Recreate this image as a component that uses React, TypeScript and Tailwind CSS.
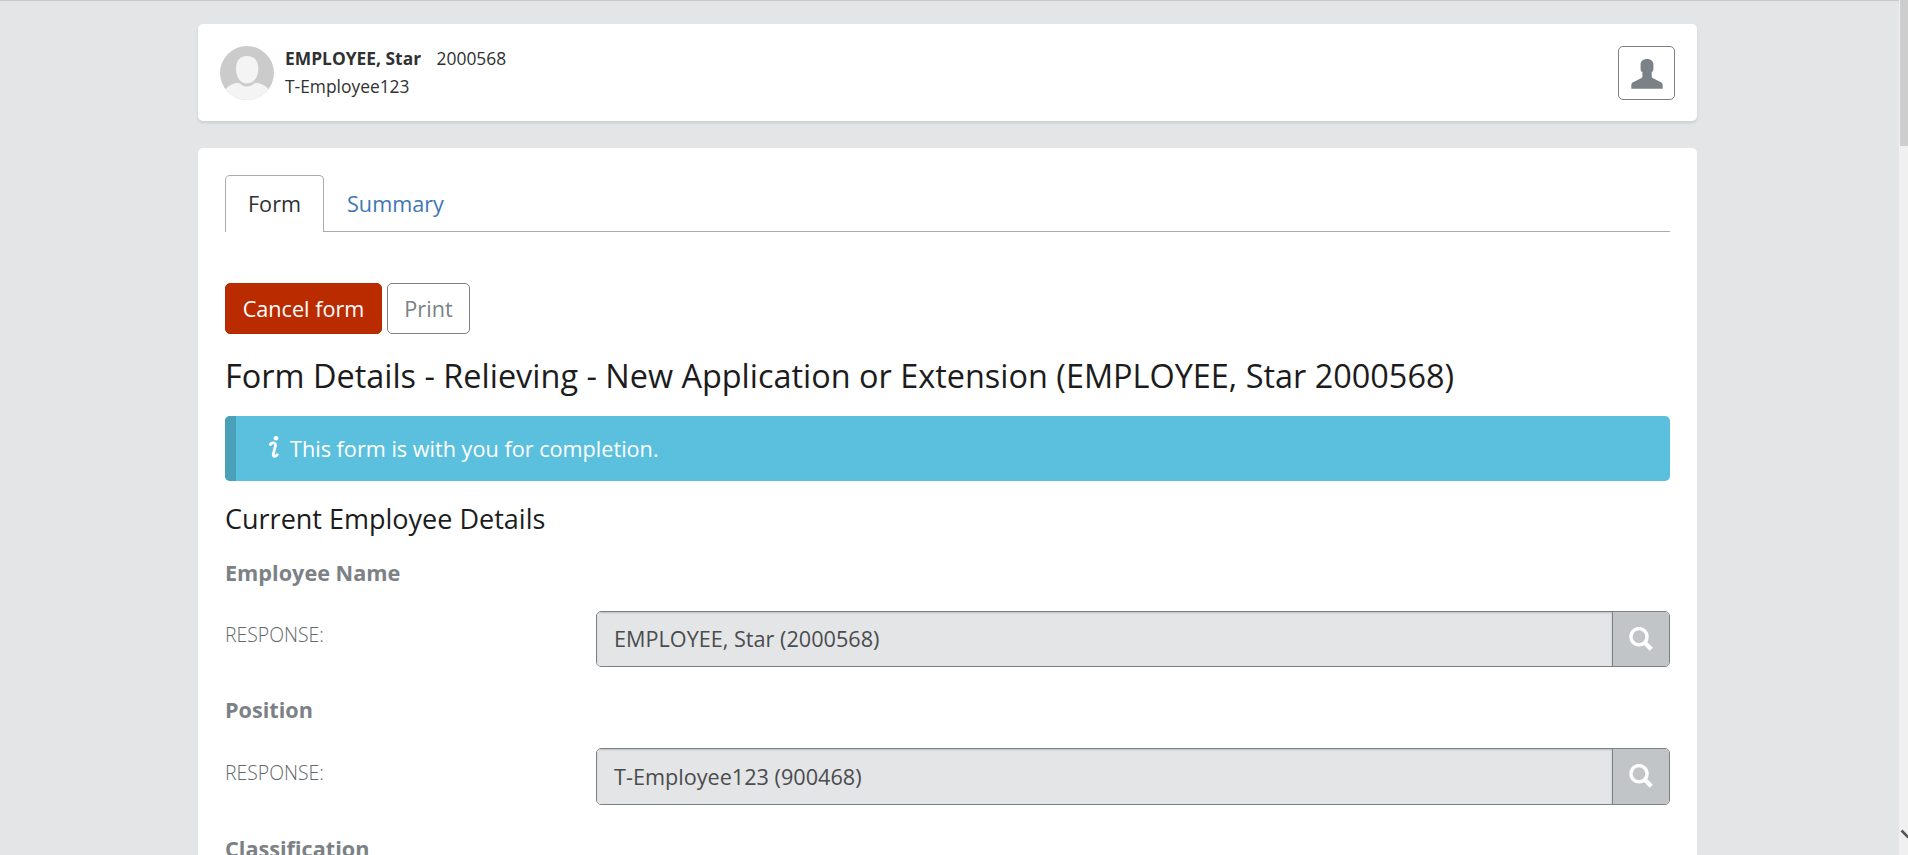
import type { ReactNode } from "react";

function Avatar() {
  return (
    <svg className="size-[54px] shrink-0" viewBox="0 0 54 54" aria-hidden="true">
      <defs>
        <clipPath id="avatar-clip">
          <circle cx="27" cy="27" r="27" />
        </clipPath>
      </defs>
      <g clipPath="url(#avatar-clip)">
        <rect width="54" height="54" fill="#cbcbcb" />
        <path d="M3 46C8 39.500 13 37 18 37C20.500 37 22 40.500 27 40.500C32 40.500 33.500 37 36 37C41 37 46 39.500 51 46V54H3Z" fill="#f4f4f4" />
        <path d="M27 10C34.500 10 38.300 15 38.300 22.500C38.300 31 34 37.500 27 37.500C20 37.500 16 31 16 22.500C16 15 19.500 10 27 10Z" fill="#f4f4f4" />
      </g>
    </svg>
  );
}

function UserIcon() {
  return (
    <svg className="mt-[2px] h-[30px] w-8" viewBox="0 0 32 30" fill="#7b8287" aria-hidden="true">
      <path d="M16 0C19.800 0 22.400 2.200 22.400 5.500V10C22.400 11.600 21.800 12.400 20.700 13.200V17.600C20.700 18.500 21.200 18.900 22 19.300L29.500 23.100C30.900 23.800 31.700 24.800 31.700 26.300V29.700H0.300V26.300C0.300 24.800 1.100 23.800 2.500 23.100L10 19.300C10.800 18.900 11.400 18.500 11.400 17.600V13.200C10.300 12.400 9.600 11.600 9.600 10V5.500C9.600 2.200 12.200 0 16 0Z" />
    </svg>
  );
}

function SearchIcon() {
  return (
    <svg className="size-6" viewBox="0 0 24 24" fill="none" stroke="#fff" aria-hidden="true">
      <circle cx="10" cy="9.700" r="8.100" strokeWidth="3.400" />
      <path d="M15.300 15.300L22.300 22.300" strokeWidth="4.400" />
    </svg>
  );
}

function InfoIcon() {
  return (
    <svg className="h-[22px] w-[10px]" viewBox="0 0 10 22" fill="none" aria-hidden="true">
      <circle cx="7" cy="2.300" r="2.300" fill="#fff" />
      <path d="M0.600 9.600C1.600 7.400 3.100 6.700 4.600 6.900C6.600 7.200 6.700 8.700 6.300 10.300L4.500 17.200C4 19.200 4.300 20.400 5.600 20.300C7 20.200 8 19.200 8.900 17.600" stroke="#fff" strokeWidth="2.800" />
    </svg>
  );
}

function Question({ title, children }: { title: string; children?: ReactNode }) {
  return (
    <div className="h-[137.4px]">
      <h4 className="h-[53.4px] pt-[0.6px] font-bold leading-[30px] text-[#7b8185]">{title}</h4>
      {children && (
        <div className="flex">
          <div className="w-[371px] shrink-0 pt-[9.4px] text-[19.4px] font-light leading-[30px] text-[#64686b]">RESPONSE:</div>
          {children}
        </div>
      )}
    </div>
  );
}

function LookupField({ value }: { value: string }) {
  return (
    <div className="flex h-[56.3px] flex-1 overflow-hidden rounded-[5px] border border-[#7b8185]">
      <div className="flex flex-1 items-center bg-[#e4e5e7] pt-[0.4px] pl-[17px] text-[#4a4c4e] shadow-[inset_0_1px_2px_rgba(0,0,0,0.18)]">{value}</div>
      <button className="flex w-[57px] items-center justify-center border-l border-[#7b8185] bg-[#c2c5c7] pr-px" aria-label="Search">
        <SearchIcon />
      </button>
    </div>
  );
}

export default function App() {
  return (
    <div className="flex h-[855px] overflow-hidden bg-[#e4e5e7] font-['Open_Sans',sans-serif] text-[21.65px] leading-[30px]">
      <main className="flex flex-1 flex-col border-t border-[#cbc8c7] pt-[23px] pl-[198px] pr-[202px]">
        <header className="flex h-[97px] shrink-0 items-start justify-between rounded-[5px] bg-white pt-[22px] pr-[22px] pl-[22px] shadow-[0_2px_3px_rgba(0,0,0,0.1)]">
          <div className="flex gap-[11px]">
            <Avatar />
            <div className="-mt-px text-[17.4px] leading-[27.5px] text-[#2f3133]">
              <div className="flex gap-[15.500px]">
                <strong className="font-bold">EMPLOYEE, Star</strong>
                <span>2000568</span>
              </div>
              <div>T-Employee123</div>
            </div>
          </div>
          <button className="flex h-[54px] w-[57px] items-center justify-center rounded-[5px] border border-[#7b8185]" aria-label="Profile">
            <UserIcon />
          </button>
        </header>

        <section className="mt-[27px] h-[800px] shrink-0 rounded-t-[5px] bg-white px-[27px] pt-[27px]">
          <nav className="flex h-[57px] border-b border-[#a9acad]">
            <a className="flex h-[57px] w-[99px] items-center justify-center rounded-t-[5px] border border-b-0 border-[#a9acad] bg-white text-[#2f3133]">Form</a>
            <a className="flex h-[57px] items-center pl-[23px] text-[#3f77b5]">Summary</a>
          </nav>

          <div className="mt-[51px] flex gap-[5px]">
            <button className="h-[51px] w-[157px] rounded-[5px] border border-[#b12a02] bg-[#bb2b00] text-white">Cancel form</button>
            <button className="h-[51px] w-[83px] rounded-[5px] border border-[#7b8185] text-[#7b8185]">Print</button>
          </div>

          <h1 className="mt-[24px] text-[32.43px] leading-9 text-[#1c1c1d]">
            Form Details - Relieving - New Application or Extension (EMPLOYEE, Star 2000568)
          </h1>

          <div className="mt-[22px] flex h-[65px] items-center overflow-hidden rounded-[5px] bg-[#5bc0de] text-white">
            <div className="h-full w-[11px] bg-[#4a9fb9]" />
            <div className="ml-[33px] mr-[11px] pb-[3px]">
              <InfoIcon />
            </div>
            <span>This form is with you for completion.</span>
          </div>

          <h2 className="mt-[22.500px] text-[27px] leading-[30px] text-[#1c1c1d]">Current Employee Details</h2>

          <div className="mt-6">
            <Question title="Employee Name">
              <LookupField value="EMPLOYEE, Star (2000568)" />
            </Question>
            <Question title="Position">
              <LookupField value="T-Employee123 (900468)" />
            </Question>
            <div className="pt-[0.8px]">
              <Question title="Classification" />
            </div>
          </div>
        </section>
      </main>

      <aside className="flex w-[9px] shrink-0 flex-col justify-between bg-[#f0f0f0] pl-px">
        <div className="h-[146px] bg-[#cdcdcd]" />
        <svg className="mb-4 h-[10px] w-2" viewBox="0 0 8 10" fill="none" aria-hidden="true">
          <path d="M1.500 1.500L8.500 8.500" stroke="#555" strokeWidth="2.600" />
        </svg>
      </aside>
    </div>
  );
}
